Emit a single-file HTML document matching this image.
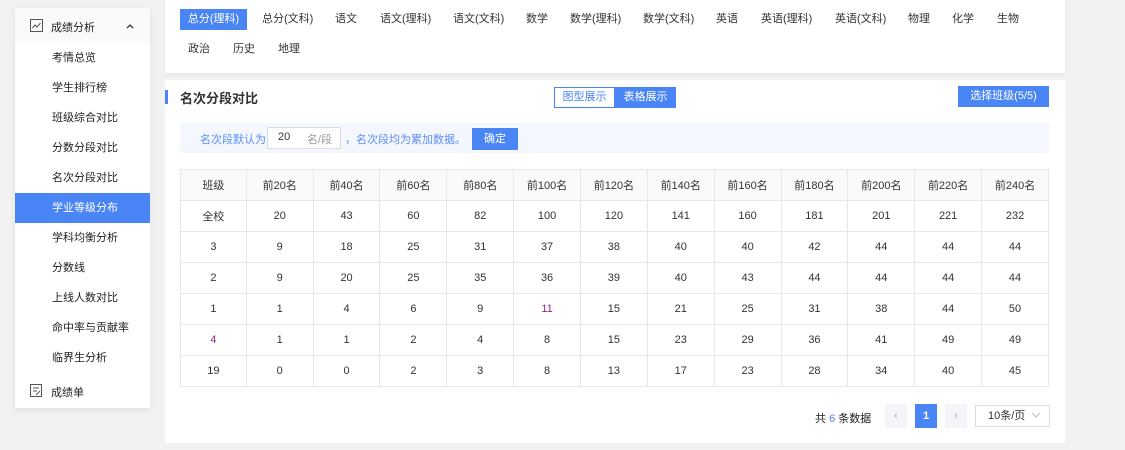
<!DOCTYPE html>
<html><head><meta charset="utf-8"><style>
*{margin:0;padding:0;box-sizing:border-box}
body{width:1125px;height:450px;background:#f2f2f2;font-family:"Liberation Sans","Noto Sans CJK SC",sans-serif;font-size:11px;color:#333;position:relative;overflow:hidden}
.abs{position:absolute}
.side{left:15px;top:8px;width:135px;height:400px;background:#fff;box-shadow:0 2px 6px rgba(0,0,0,.08)}
.side .hd{position:absolute;left:0;top:0;width:135px;height:35px;background:#fafafa}
.side .it{position:absolute;left:0;width:135px;height:30px;line-height:30px;padding-left:37px;color:#222}
.side .it.on{background:#4a85f6;color:#fff}
.top{left:165px;top:0;width:900px;height:73px;background:#fff;box-shadow:0 2px 6px rgba(0,0,0,.06)}
.tab{position:absolute;height:21px;line-height:21px;color:#333;white-space:nowrap}
.tab.on{background:#4a85f6;color:#fff;width:67px;text-align:center}
.main{left:165px;top:80px;width:900px;height:363px;background:#fff}
table{position:absolute;left:180px;top:169px;border-collapse:collapse;width:869px;font-size:11px}
td{border:1px solid #e8e8e8;height:31px;text-align:center;color:#333;width:67px}
tr:first-child td{background:#fafafa}
td:first-child{width:66px}
</style></head><body>
<div class="abs side">
 <div class="hd"></div>
 <svg class="abs" style="left:15px;top:11px" width="13" height="13" viewBox="0 0 13 13"><rect x="0.5" y="0.5" width="12" height="12" fill="none" stroke="#555"/><path d="M2.5 9 L5 6 L7 8 L10.5 4" fill="none" stroke="#555"/></svg>
 <div class="abs" style="left:36px;top:11px;color:#222">成绩分析</div>
 <svg class="abs" style="left:111px;top:15px" width="8" height="6"><path d="M1 5 L4 2 L7 5" fill="none" stroke="#333" stroke-width="1.3"/></svg>
 <div class="it" style="top:35px">考情总览</div>
 <div class="it" style="top:65px">学生排行榜</div>
 <div class="it" style="top:95px">班级综合对比</div>
 <div class="it" style="top:125px">分数分段对比</div>
 <div class="it" style="top:155px">名次分段对比</div>
 <div class="it on" style="top:185px">学业等级分布</div>
 <div class="it" style="top:215px">学科均衡分析</div>
 <div class="it" style="top:245px">分数线</div>
 <div class="it" style="top:275px">上线人数对比</div>
 <div class="it" style="top:305px">命中率与贡献率</div>
 <div class="it" style="top:335px">临界生分析</div>
 <svg class="abs" style="left:15px;top:376px" width="12" height="13" viewBox="0 0 12 13"><rect x="0.5" y="0.5" width="11" height="12" fill="none" stroke="#555"/><path d="M3 4h6M3 7h4M6 11 L10 7" stroke="#555" fill="none"/></svg>
 <div class="abs" style="left:36px;top:376px;color:#222">成绩单</div>
</div>
<div class="abs top">
 <div class="tab on" style="left:15px;top:9px">总分(理科)</div>
 <div class="tab" style="left:97px;top:9px">总分(文科)</div>
 <div class="tab" style="left:170px;top:9px">语文</div>
 <div class="tab" style="left:215px;top:9px">语文(理科)</div>
 <div class="tab" style="left:288px;top:9px">语文(文科)</div>
 <div class="tab" style="left:361px;top:9px">数学</div>
 <div class="tab" style="left:405px;top:9px">数学(理科)</div>
 <div class="tab" style="left:478px;top:9px">数学(文科)</div>
 <div class="tab" style="left:551px;top:9px">英语</div>
 <div class="tab" style="left:596px;top:9px">英语(理科)</div>
 <div class="tab" style="left:670px;top:9px">英语(文科)</div>
 <div class="tab" style="left:743px;top:9px">物理</div>
 <div class="tab" style="left:787px;top:9px">化学</div>
 <div class="tab" style="left:832px;top:9px">生物</div>
 <div class="tab" style="left:23px;top:39px">政治</div>
 <div class="tab" style="left:68px;top:39px">历史</div>
 <div class="tab" style="left:113px;top:39px">地理</div>
</div>
<div class="abs main"></div>
<div class="abs" style="left:165px;top:90px;width:3px;height:14px;background:#4a85f6"></div>
<div class="abs" style="left:180px;top:88px;font-size:13px;font-weight:bold;color:#333">名次分段对比</div>
<div class="abs" style="left:554px;top:87px;width:61px;height:21px;border:1px solid #4a85f6;color:#4a85f6;text-align:center;line-height:19px">图型展示</div>
<div class="abs" style="left:615px;top:87px;width:61px;height:21px;background:#4a85f6;color:#fff;text-align:center;line-height:21px">表格展示</div>
<div class="abs" style="left:958px;top:86px;width:91px;height:21px;background:#4a85f6;color:#fff;text-align:center;line-height:21px">选择班级(5/5)</div>
<div class="abs" style="left:180px;top:123px;width:869px;height:30px;background:#f4f7fe"></div>
<div class="abs" style="left:200px;top:131px;color:#5b8ef5">名次段默认为</div>
<div class="abs" style="left:267px;top:127px;width:74px;height:22px;background:#fff;border:1px solid #ddd"></div>
<div class="abs" style="left:278px;top:131px;color:#333">20</div>
<div class="abs" style="left:307px;top:131px;color:#999">名/段</div>
<div class="abs" style="left:345px;top:131px;color:#5b8ef5">，名次段均为累加数据。</div>
<div class="abs" style="left:472px;top:128px;width:46px;height:22px;background:#4a85f6;color:#fff;text-align:center;line-height:22px">确定</div>
<table>
<tr><td>班级</td><td>前20名</td><td>前40名</td><td>前60名</td><td>前80名</td><td>前100名</td><td>前120名</td><td>前140名</td><td>前160名</td><td>前180名</td><td>前200名</td><td>前220名</td><td>前240名</td></tr>
<tr><td>全校</td><td>20</td><td>43</td><td>60</td><td>82</td><td>100</td><td>120</td><td>141</td><td>160</td><td>181</td><td>201</td><td>221</td><td>232</td></tr>
<tr><td>3</td><td>9</td><td>18</td><td>25</td><td>31</td><td>37</td><td>38</td><td>40</td><td>40</td><td>42</td><td>44</td><td>44</td><td>44</td></tr>
<tr><td>2</td><td>9</td><td>20</td><td>25</td><td>35</td><td>36</td><td>39</td><td>40</td><td>43</td><td>44</td><td>44</td><td>44</td><td>44</td></tr>
<tr><td>1</td><td>1</td><td>4</td><td>6</td><td>9</td><td style="color:#8a2a8a">11</td><td>15</td><td>21</td><td>25</td><td>31</td><td>38</td><td>44</td><td>50</td></tr>
<tr><td style="color:#8a2a8a">4</td><td>1</td><td>1</td><td>2</td><td>4</td><td>8</td><td>15</td><td>23</td><td>29</td><td>36</td><td>41</td><td>49</td><td>49</td></tr>
<tr><td>19</td><td>0</td><td>0</td><td>2</td><td>3</td><td>8</td><td>13</td><td>17</td><td>23</td><td>28</td><td>34</td><td>40</td><td>45</td></tr>
</table>
<div class="abs" style="left:815px;top:410px;color:#222">共 <span style="color:#4a85f6">6</span> 条数据</div>
<div class="abs" style="left:885px;top:404px;width:22px;height:24px;background:#f4f5f9;color:#aaa;text-align:center;line-height:24px">‹</div>
<div class="abs" style="left:915px;top:404px;width:22px;height:24px;background:#4a85f6;color:#fff;font-weight:bold;text-align:center;line-height:24px">1</div>
<div class="abs" style="left:945px;top:404px;width:22px;height:24px;background:#f4f5f9;color:#aaa;text-align:center;line-height:24px">›</div>
<div class="abs" style="left:975px;top:405px;width:75px;height:22px;border:1px solid #ddd;line-height:20px;padding-left:12px;color:#333">10条/页</div>
<svg class="abs" style="left:1031px;top:412px" width="10" height="6"><path d="M1 1 L5 5 L9 1" fill="none" stroke="#bbb"/></svg>
</body></html>
